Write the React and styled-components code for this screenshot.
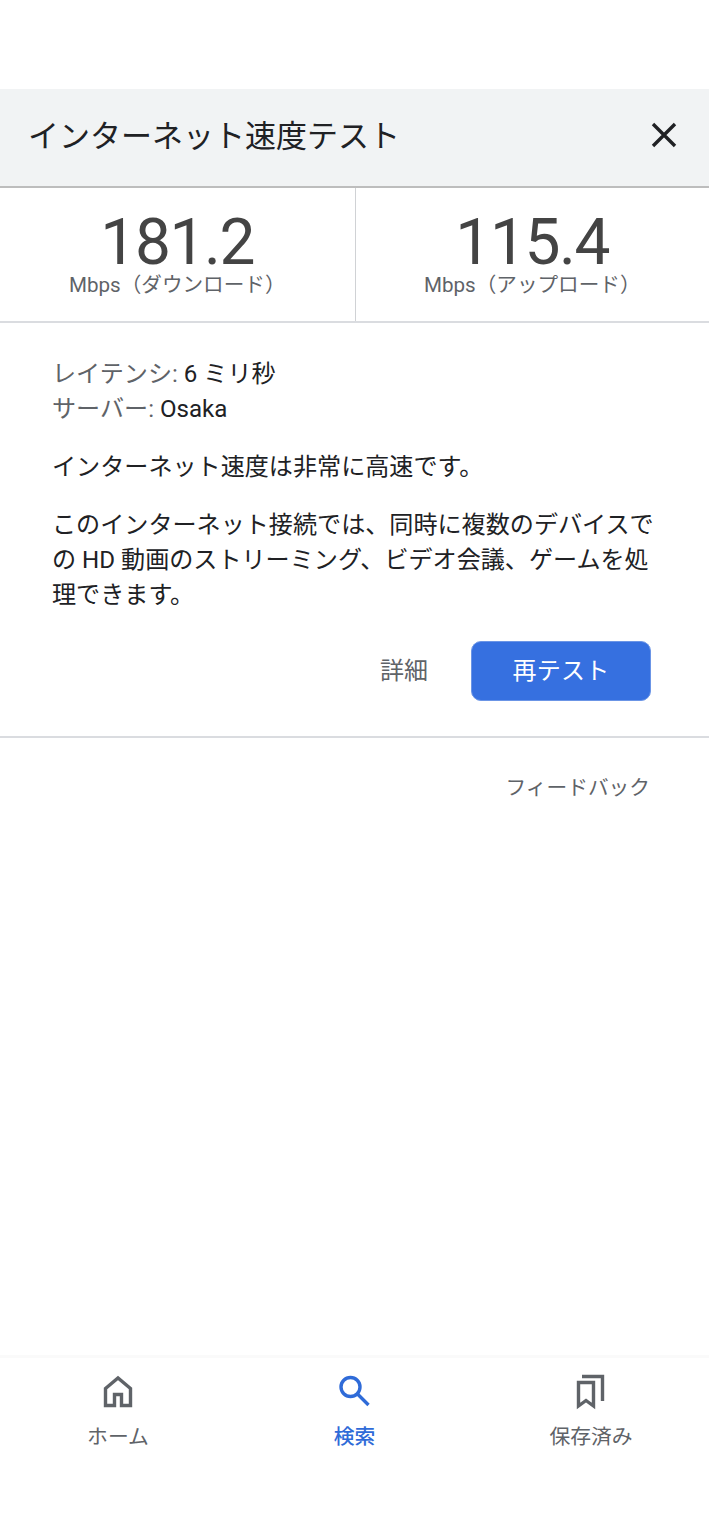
import React from "react";
import styled, { createGlobalStyle } from "styled-components";

const GlobalStyle = createGlobalStyle`
    html, body {
        margin: 0;
        padding: 0;
        background: #fff;
    }
    body {
        font-family: Roboto, "Noto Sans CJK JP", sans-serif;
    }
    * {
        box-sizing: border-box;
    }
`;

const Page = styled.div`
    min-height: 1536px;
    padding-top: 89px;
    display: flex;
    flex-direction: column;
`;

const Header = styled.header`
    height: 99px;
    background: #f1f3f4;
    border-bottom: 2px solid #bdbdbd;
    padding: 0 29px 8px 28px;
    display: flex;
    align-items: center;
    justify-content: space-between;
`;

const Title = styled.h1`
    margin: 0;
    font-size: 31px;
    font-weight: 400;
    color: #202124;
`;

const CloseButton = styled.button`
    width: 32px;
    height: 32px;
    margin-top: 2px;
    padding: 0;
    border: 0;
    background: none;
    color: #202124;
`;

const CloseIcon = styled.svg`
    display: block;
    width: 32px;
    height: 32px;
    stroke: currentColor;
    stroke-width: 3.4;
`;

const Stats = styled.section`
    height: 135px;
    display: grid;
    grid-template-columns: 1fr 1fr;
    border-bottom: 2px solid #dadce0;
`;

const Stat = styled.div`
    display: flex;
    flex-direction: column;
    align-items: center;
    padding-top: 27px;
    & + & {
        border-left: 1px solid #d0d2d5;
    }
`;

const StatValue = styled.div`
    font-size: 64px;
    line-height: 56px;
    letter-spacing: -1.4px;
    color: #444;
`;

const StatUnit = styled.div`
    font-size: 20.6px;
    line-height: 28px;
    color: #5f6368;
`;

const Body = styled.section`
    padding: 34px 53px 35px 52px;
    border-bottom: 2px solid #dadce0;
`;

const Meta = styled.div`
    font-size: 24.1px;
    line-height: 35px;
    color: #5f6368;
`;

const MetaValue = styled.span`
    color: #202124;
`;

const Paragraph = styled.p`
    margin: 23px 0 0;
    font-size: 24.1px;
    line-height: 35px;
    color: #202124;
`;

const Actions = styled.div`
    margin-top: 28px;
    padding-right: 5px;
    display: flex;
    align-items: center;
    justify-content: flex-end;
    gap: 43px;
`;

const DetailsLink = styled.a`
    padding-bottom: 6px;
    font-size: 24px;
    color: #5f6368;
`;

const RetestButton = styled.button`
    width: 180px;
    height: 60px;
    padding: 0 0 6px;
    border: 1px solid #6b95e6;
    border-radius: 10px;
    background: #3670e0;
    color: #fff;
    font: inherit;
    font-size: 24px;
    letter-spacing: 0.2px;
`;

const Feedback = styled.div`
    padding: 35px 59px 0 0;
    text-align: right;
    font-size: 20.7px;
    line-height: 30px;
    color: #5f6368;
`;

const BottomNav = styled.nav`
    margin-top: auto;
    height: 181px;
    border-top: 3px solid #fafafa;
    display: grid;
    grid-template-columns: 236px 237px 236px;
`;

const NavItem = styled.a`
    display: flex;
    flex-direction: column;
    align-items: center;
    padding-top: 13px;
    font-size: 20.8px;
    line-height: 30px;
    color: ${(props) => (props.$active ? "#2f6bd8" : "#5f6368")};
    font-weight: ${(props) => (props.$active ? 500 : 400)};
`;

const NavIcon = styled.svg`
    width: 40px;
    height: 40px;
    margin-bottom: 11px;
    fill: none;
    stroke: currentColor;
    stroke-width: 3.4;
`;

const App = () => (
    <Page>
        <GlobalStyle />
        <Header>
            <Title>インターネット速度テスト</Title>
            <CloseButton aria-label="閉じる">
                <CloseIcon viewBox="0 0 32 32">
                    <path d="M5 5l22 22M27 5L5 27" />
                </CloseIcon>
            </CloseButton>
        </Header>
        <Stats>
            <Stat>
                <StatValue>181.2</StatValue>
                <StatUnit>Mbps（ダウンロード）</StatUnit>
            </Stat>
            <Stat>
                <StatValue>115.4</StatValue>
                <StatUnit>Mbps（アップロード）</StatUnit>
            </Stat>
        </Stats>
        <Body>
            <Meta>
                レイテンシ: <MetaValue>6 ミリ秒</MetaValue>
                <br />
                サーバー: <MetaValue>Osaka</MetaValue>
            </Meta>
            <Paragraph>インターネット速度は非常に高速です。</Paragraph>
            <Paragraph>
                このインターネット接続では、同時に複数のデバイスでの HD 動画のストリーミング、ビデオ会議、ゲームを処理できます。
            </Paragraph>
            <Actions>
                <DetailsLink>詳細</DetailsLink>
                <RetestButton>再テスト</RetestButton>
            </Actions>
        </Body>
        <Feedback>フィードバック</Feedback>
        <BottomNav>
            <NavItem>
                <NavIcon viewBox="0 0 40 40">
                    <path d="M7.500 34.500V17.500L20 7l12.500 10.500v17h-9v-11h-7v11z" />
                </NavIcon>
                ホーム
            </NavItem>
            <NavItem $active>
                <NavIcon viewBox="0 0 40 40">
                    <circle cx="15.500" cy="16" r="9.500" />
                    <path d="M22.500 23l11 11" />
                </NavIcon>
                検索
            </NavItem>
            <NavItem>
                <NavIcon viewBox="0 0 40 40">
                    <path d="M7.500 11.500h15V35L15 29.500 7.500 35z" />
                    <path d="M11 5.500h20.500V30" />
                </NavIcon>
                保存済み
            </NavItem>
        </BottomNav>
    </Page>
);

export default App;
